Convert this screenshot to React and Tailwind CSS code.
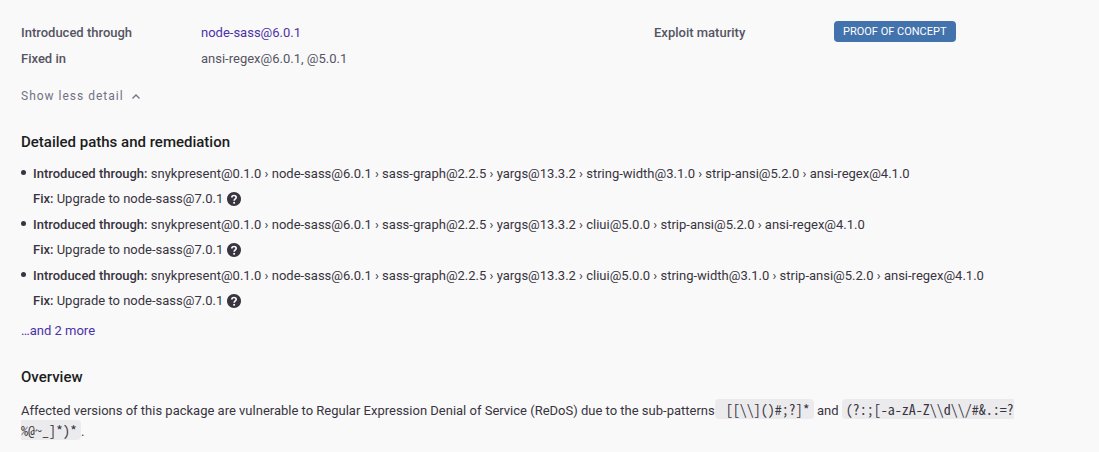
const paths = [
  ['snykpresent@0.1.0', 'node-sass@6.0.1', 'sass-graph@2.2.5', 'yargs@13.3.2', 'string-width@3.1.0', 'strip-ansi@5.2.0', 'ansi-regex@4.1.0'],
  ['snykpresent@0.1.0', 'node-sass@6.0.1', 'sass-graph@2.2.5', 'yargs@13.3.2', 'cliui@5.0.0', 'strip-ansi@5.2.0', 'ansi-regex@4.1.0'],
  ['snykpresent@0.1.0', 'node-sass@6.0.1', 'sass-graph@2.2.5', 'yargs@13.3.2', 'cliui@5.0.0', 'string-width@3.1.0', 'strip-ansi@5.2.0', 'ansi-regex@4.1.0'],
];

function HelpIcon() {
  return (
    <svg viewBox="2 2 20 20" className="size-[14px]" fill="currentColor" aria-hidden="true">
      <path stroke="#f9f9f9" strokeWidth="0" d="M12 2C6.48 2 2 6.48 2 12s4.48 10 10 10 10-4.48 10-10S17.52 2 12 2z" />
      <path d="M8.9 9.8C8.9 8 10.2 7 12 7s3.1 1.1 3.1 2.8c0 2-2.9 2.2-2.9 4.7" fill="none" stroke="#f9f9f9" strokeWidth="2.4" />
      <path d="M10.9 16.2h2.6v2.5h-2.6z" fill="#f9f9f9" />
    </svg>
  );
}

function Code({ children }) {
  return (
    <code className="rounded bg-[#ebebed] px-1 font-['Noto_Sans_Mono_CJK_SC','Liberation_Mono',monospace] text-[14px] leading-none break-all whitespace-pre-wrap">
      {children}
    </code>
  );
}

export default function App() {
  return (
    <main className="min-h-screen bg-[#f9f9f9] px-[21px] pt-5 pb-2 font-[Roboto,sans-serif] text-[13px] text-[#383440]">
      <div className="grid grid-cols-[633fr_424fr] text-[#555463]">
        <dl className="grid grid-cols-[180px_1fr] leading-[26px]">
          <dt className="font-medium">Introduced through</dt>
          <dd><a href="#node-sass" className="text-[#4b31a8]">node-sass@6.0.1</a></dd>
          <dt className="font-medium">Fixed in</dt>
          <dd>ansi-regex@6.0.1, @5.0.1</dd>
        </dl>
        <dl className="grid grid-cols-[180px_1fr] items-start">
          <dt className="leading-[26px] font-medium">Exploit maturity</dt>
          <dd className="flex h-[22px] items-center">
            <span className="rounded bg-[#4373ac] px-[9px] text-[11px] leading-[21px] text-white">PROOF OF CONCEPT</span>
          </dd>
        </dl>
      </div>

      <button type="button" className="mt-[14px] flex items-center gap-2 text-[12px] leading-5 tracking-[1px] text-[#727184]">
        Show less detail
        <svg viewBox="0 0 8 5" className="h-[5px] w-2" fill="none" stroke="currentColor" strokeWidth="1.3" aria-hidden="true">
          <path d="M.5 4.5 4 1l3.5 3.5" />
        </svg>
      </button>

      <h2 className="mt-6 text-[15px] leading-6 font-medium text-[#1c1c21]">Detailed paths and remediation</h2>
      <ul className="mt-[7px] flex flex-col gap-px leading-[25px]">
        {paths.map((path) => (
          <li key={path.join()} className="flex gap-[7px]">
            <span className="mt-[9px] size-[5px] shrink-0 rounded-full bg-current" />
            <div>
              <p><strong className="font-medium">Introduced through:</strong> {path.join(' › ')}</p>
              <p className="flex items-center gap-1">
                <span><strong className="font-medium">Fix:</strong> Upgrade to node-sass@7.0.1</span>
                <button type="button" aria-label="Help"><HelpIcon /></button>
              </p>
            </div>
          </li>
        ))}
      </ul>
      <a href="#more" className="mt-2 block leading-5 text-[#4b31a8]">…and 2 more</a>

      <h2 className="mt-6 text-[15px] leading-6 font-medium text-[#1c1c21]">Overview</h2>
      <p className="mt-[11px] mr-[60px] leading-[21px]">
        Affected versions of this package are vulnerable to Regular Expression Denial of Service (ReDoS) due to the sub-patterns
        <Code>{' [[\\\\]()#;?]*'}</Code> and <Code>{'(?:;[-a-zA-Z\\\\d\\\\/#&.:=?%@~_]*)*'}</Code>.
      </p>
    </main>
  );
}
